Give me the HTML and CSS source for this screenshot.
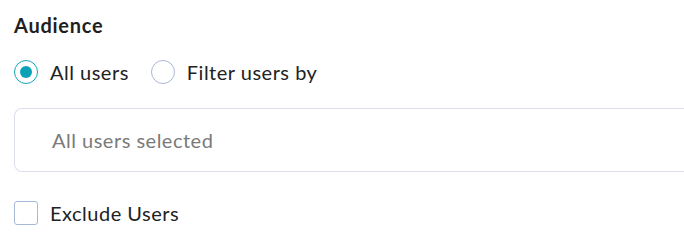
FILE: index.html
```html
<!DOCTYPE html>
<html>
<head>
<meta charset="utf-8">
<link rel="stylesheet" href="styles.css">
</head>
<body>
<div class="panel">
  <h2 class="title">Audience</h2>
  <div class="radios">
    <label class="radio-opt"><span class="radio checked"></span><span class="opt-label">All users</span></label>
    <label class="radio-opt"><span class="radio"></span><span class="opt-label">Filter users by</span></label>
  </div>
  <div class="select-box"><span class="placeholder">All users selected</span></div>
  <label class="check-opt"><span class="checkbox"></span><span class="opt-label">Exclude Users</span></label>
</div>
</body>
</html>
```
FILE: styles.css
```css
html, body {
  margin: 0;
  padding: 0;
  background: #ffffff;
}
body {
  font-family: Lato, "Noto Sans", sans-serif;
  color: #222222;
  letter-spacing: 0.5px;
}
.panel {
  padding: 11px 0 0 14px;
}
.title {
  margin: 0;
  font-size: 20px;
  font-weight: 700;
  line-height: 28px;
  letter-spacing: 0.75px;
  color: #1f1f1f;
}
.radios {
  display: flex;
  align-items: center;
  gap: 22px;
  margin-top: 21px;
}
.radio-opt, .check-opt {
  display: flex;
  align-items: center;
  gap: 12px;
}
.radio {
  width: 24px;
  height: 24px;
  box-sizing: border-box;
  border: 1px solid #aab6d6;
  border-radius: 50%;
  display: flex;
  align-items: center;
  justify-content: center;
}
.radio.checked {
  border-color: #12a6b8;
}
.radio.checked::after {
  content: "";
  width: 12px;
  height: 12px;
  border-radius: 50%;
  background: #0aa3b5;
}
.opt-label {
  font-size: 20px;
  line-height: 24px;
  color: #222222;
}
.select-box {
  margin-top: 24px;
  height: 64px;
  box-sizing: border-box;
  border: 1px solid #dcdfee;
  border-right: none;
  border-radius: 8px 0 0 8px;
  display: flex;
  align-items: center;
  padding-left: 37px;
}
.placeholder {
  font-size: 20px;
  color: #7a7a7a;
}
.check-opt {
  margin-top: 29px;
}
.checkbox {
  width: 24px;
  height: 24px;
  box-sizing: border-box;
  border: 1px solid #a8b8d8;
  border-radius: 3px;
}
```
